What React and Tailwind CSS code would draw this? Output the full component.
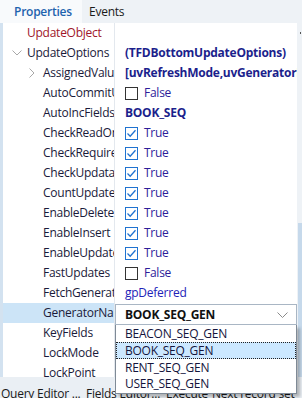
import React from "react";

const Check = () => (
  <span className="w-[13px] h-[13px] border border-[#1f72d0] bg-white flex items-center justify-center shrink-0">
    <svg width="11" height="11" viewBox="0 0 11 11">
      <path d="M1.5 5.5 L4.2 8.2 L9.5 2.2" fill="none" stroke="#1f72d0" strokeWidth="1.3" />
    </svg>
  </span>
);
const Box = () => <span className="w-[13px] h-[13px] border border-[#333] bg-white shrink-0" />;

const rows = [
  { name: "UpdateObject", red: true, indent: 27, v: null },
  { name: "UpdateOptions", indent: 27, chev: "down", v: { t: "(TFDBottomUpdateOptions)", bold: true } },
  { name: "AssignedValues", indent: 43, chev: "right", v: { t: "[uvRefreshMode,uvGeneratorName]", bold: true } },
  { name: "AutoCommitUpdates", indent: 43, v: { cb: false, t: "False" } },
  { name: "AutoIncFields", indent: 43, v: { t: "BOOK_SEQ", bold: true } },
  { name: "CheckReadOnly", indent: 43, v: { cb: true, t: "True" } },
  { name: "CheckRequired", indent: 43, v: { cb: true, t: "True" } },
  { name: "CheckUpdatable", indent: 43, v: { cb: true, t: "True" } },
  { name: "CountUpdatedRecords", indent: 43, v: { cb: true, t: "True" } },
  { name: "EnableDelete", indent: 43, v: { cb: true, t: "True" } },
  { name: "EnableInsert", indent: 43, v: { cb: true, t: "True" } },
  { name: "EnableUpdate", indent: 43, v: { cb: true, t: "True" } },
  { name: "FastUpdates", indent: 43, v: { cb: false, t: "False" } },
  { name: "FetchGeneratorsPoint", indent: 43, v: { t: "gpDeferred", plain: true } },
  { name: "GeneratorName", indent: 43, sel: true, v: null },
  { name: "KeyFields", indent: 43, v: null },
  { name: "LockMode", indent: 43, v: null },
  { name: "LockPoint", indent: 43, v: null },
];

function Row({ r }) {
  return (
    <div className="flex h-[20px] shrink-0">
      <div className={`w-[111px] shrink-0 relative overflow-hidden flex items-center whitespace-nowrap ${r.sel ? "bg-[#cce4f7]" : ""}`}>
        {r.chev === "down" && (
          <svg className="absolute left-[9px] top-[7px]" width="10" height="6" viewBox="0 0 10 6">
            <path d="M0.5 0.5 L5 5 L9.5 0.5" fill="none" stroke="#a8a8a8" strokeWidth="1" />
          </svg>
        )}
        {r.chev === "right" && (
          <svg className="absolute left-[26px] top-[5px]" width="6" height="10" viewBox="0 0 6 10">
            <path d="M0.5 0.5 L5 5 L0.5 9.5" fill="none" stroke="#a8a8a8" strokeWidth="1" />
          </svg>
        )}
        <span className={`${r.red ? "text-[#a0162a]" : "text-[#1a1a3a]"}`} style={{ marginLeft: r.indent - 3 }}>
          {r.name}
        </span>
      </div>
      <div className="w-[1px] bg-[#e3e8ee] shrink-0" />
      <div className="flex-1 overflow-hidden flex items-center whitespace-nowrap pl-[10px]">
        {r.v && r.v.cb !== undefined && (
          <span className="flex items-center gap-[6px]">
            {r.v.cb ? <Check /> : <Box />}
            <span className="text-[#2d1d9a]">{r.v.t}</span>
          </span>
        )}
        {r.v && r.v.cb === undefined && (
          <span className={r.v.bold ? "font-bold text-[#1c1f8c]" : "text-[#2222b8]"}>{r.v.t}</span>
        )}
      </div>
    </div>
  );
}

export default function App() {
  return (
    <div className="w-[302px] h-[398px] relative overflow-hidden bg-[#eaeff4] text-[12px] leading-[16px] tracking-[-0.25px] font-['Segoe_UI','Open_Sans','Noto_Sans',sans-serif] flex flex-col">
      <div className="h-[23px] flex shrink-0 bg-[#eef2f6]">
        <div className="w-[82px] bg-[#f8fafc] flex items-center pl-[14px] font-semibold text-[#1e63ae]">Properties</div>
        <div className="flex items-center pl-[7px] text-[#1a1a1a]">Events</div>
        <div className="flex-1 relative">
          <svg className="absolute left-[209px] top-[7px]" width="14" height="14" viewBox="0 0 14 14">
            <circle cx="8.5" cy="5.5" r="4" fill="none" stroke="#333" strokeWidth="1.1" />
            <path d="M5.6 8.4 L1 13" stroke="#333" strokeWidth="1.2" />
          </svg>
        </div>
      </div>
      <div className="h-[354px] flex shrink-0">
        <div className="w-[3px] bg-[#d3e2f0] shrink-0" />
        <div className="w-[294px] bg-white flex flex-col overflow-hidden shrink-0">
          {rows.map((r) => (
            <Row key={r.name} r={r} />
          ))}
        </div>
        <div className="flex-1 flex flex-col bg-[#eef2f6]">
          <div className="h-[10px] flex justify-end pt-[9px] pr-[1px]">
            <span className="w-[1px] h-[2px] bg-[#555]" />
          </div>
          <div className="h-[190px]" />
          <div className="flex-1 bg-[#c6d9eb] ml-[1px]" />
        </div>
      </div>
      <div className="flex-1 pt-[9px] whitespace-nowrap text-[#1a1a1a] overflow-hidden flex">
        <span className="w-[86px] pl-[1px] shrink-0">Query Editor ...</span>
        <span className="w-[80px] shrink-0">Fields Editor...</span>
        <span className="w-[46px] shrink-0">Execute</span>
        <span className="shrink-0">Next record set</span>
      </div>

      <div className="absolute left-[115px] top-[304px] w-[182px]">
        <div className="h-[21px] bg-white border border-[#a9b6c4] flex items-center pl-[9px] relative">
          <span className="font-bold text-[#111]">BOOK_SEQ_GEN</span>
          <svg className="absolute right-[8px] top-[7px]" width="11" height="6" viewBox="0 0 11 6">
            <path d="M0.5 0.5 L5.5 5.5 L10.5 0.5" fill="none" stroke="#8a8a8a" strokeWidth="1" />
          </svg>
        </div>
        <div className="bg-white border border-[#7f8a96] border-t-0 shadow-[3px_3px_3px_rgba(0,0,0,0.25)] pb-[1px]">
          <div className="h-[17px] flex items-center pl-[9px] text-[#14143c]">BEACON_SEQ_GEN</div>
          <div className="h-[17px] flex items-center pl-[8px] text-[#14143c] bg-[#cce8ff] border border-dotted border-[#222]">BOOK_SEQ_GEN</div>
          <div className="h-[17px] flex items-center pl-[9px] text-[#14143c]">RENT_SEQ_GEN</div>
          <div className="h-[16px] flex items-center pl-[9px] text-[#14143c]">USER_SEQ_GEN</div>
        </div>
      </div>
    </div>
  );
}
